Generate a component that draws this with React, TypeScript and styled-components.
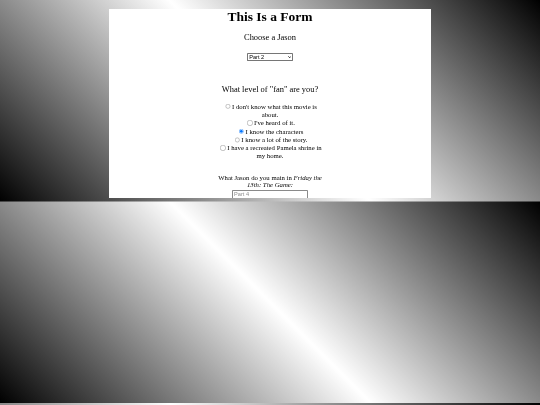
import styled, { createGlobalStyle } from 'styled-components';

// the shot is a 1280px-wide page shrunk to 540px, so native controls are zoomed by the same amount
const SCALE = 540 / 1280;

const GlobalStyle = createGlobalStyle`
  html {
    background: linear-gradient(45deg, #000, #fff, #000);
    background-size: 100% 201.5px;
    background-repeat: repeat;
    min-height: 100%;
  }
  body {
    margin: 0;
    font-family: "Liberation Serif", "Times New Roman", serif;
  }
`;

const FormCard = styled.main`
  width: 322px;
  height: 189px;
  margin: 9px auto 0;
  background-color: #fff;
  text-align: center;
  color: #000;
  font-size: 6.75px;
  will-change: transform;
`;

const Title = styled.h1`
  margin: 0;
  font-size: 13.5px;
  line-height: 15px;
  font-weight: 700;
`;

const Prompt = styled.p<{ gap: number }>`
  margin: ${(props) => props.gap}px 0 0;
  font-size: 8.44px;
  line-height: 9.3px;
`;

const SelectWrap = styled.div`
  position: relative;
  width: 47px;
  height: 8px;
  margin: 10.4px auto 0;
`;

const JasonSelect = styled.select`
  zoom: ${SCALE};
  display: block;
  box-sizing: border-box;
  appearance: none;
  width: 111px;
  height: 19px;
  margin: 0;
  padding: 0 20px 0 4px;
  font-family: "Liberation Sans", Arial, sans-serif;
  font-size: 13.33px;
  border: 1px solid #767676;
  border-radius: 2px;
  background: #fff;
  color: #000;
  outline: none;
`;

const Chevron = styled.svg`
  position: absolute;
  right: 2.4px;
  top: 2.8px;
  width: 3.4px;
  height: 2.4px;
  pointer-events: none;
`;

const OptionList = styled.div`
  width: 110px;
  margin: 8.4px auto 0;
`;

const OptionRow = styled.label`
  display: block;
  line-height: 8.28px;
`;

const Radio = styled.input`
  zoom: ${SCALE};
  width: 13px;
  height: 13px;
  margin: 0 3px 0 5px;
  vertical-align: -1.5px;
`;

const Question = styled.p`
  width: 110px;
  margin: 13px auto 0;
  line-height: 7.6px;
`;

const TextInput = styled.input`
  zoom: ${SCALE};
  display: block;
  box-sizing: border-box;
  width: 179px;
  height: 21px;
  margin: ${0.8 / SCALE}px auto 0;
  padding: 1px 2px;
  font-family: "Liberation Sans", Arial, sans-serif;
  font-size: 13.33px;
  border: 1px solid #8a8a8a;
  border-radius: 2px;
  outline: none;

  &::placeholder {
    color: #8e8e8e;
  }
`;

const fanLevels = [
  { value: 'none', label: "I don't know what this movie is about." },
  { value: 'heard', label: "I've heard of it." },
  { value: 'characters', label: 'I know the characters' },
  { value: 'story', label: 'I know a lot of the story.' },
  { value: 'shrine', label: 'I have a recreated Pamela shrine in my home.' },
];

const App = () => (
  <>
    <GlobalStyle />
    <FormCard>
      <Title>This Is a Form</Title>
      <Prompt gap={9.4}>Choose a Jason</Prompt>
      <SelectWrap>
        <JasonSelect defaultValue="part2">
          <option value="part1">Part 1</option>
          <option value="part2">Part 2</option>
          <option value="part3">Part 3</option>
          <option value="part4">Part 4</option>
        </JasonSelect>
        <Chevron viewBox="0 0 10 7">
          <polyline points="1,1 5,5 9,1" fill="none" stroke="#000" strokeWidth="2.4" />
        </Chevron>
      </SelectWrap>
      <Prompt gap={24}>What level of "fan" are you?</Prompt>
      <OptionList>
        {fanLevels.map((level) => (
          <OptionRow key={level.value}>
            <Radio
              type="radio"
              name="fan"
              value={level.value}
              defaultChecked={level.value === 'characters'}
            />
            {level.label}
          </OptionRow>
        ))}
      </OptionList>
      <Question>
        What Jason do you main in <i>Friday the 13th: The Game:</i>
      </Question>
      <TextInput type="text" placeholder="Part 4" />
    </FormCard>
  </>
);

export default App;
